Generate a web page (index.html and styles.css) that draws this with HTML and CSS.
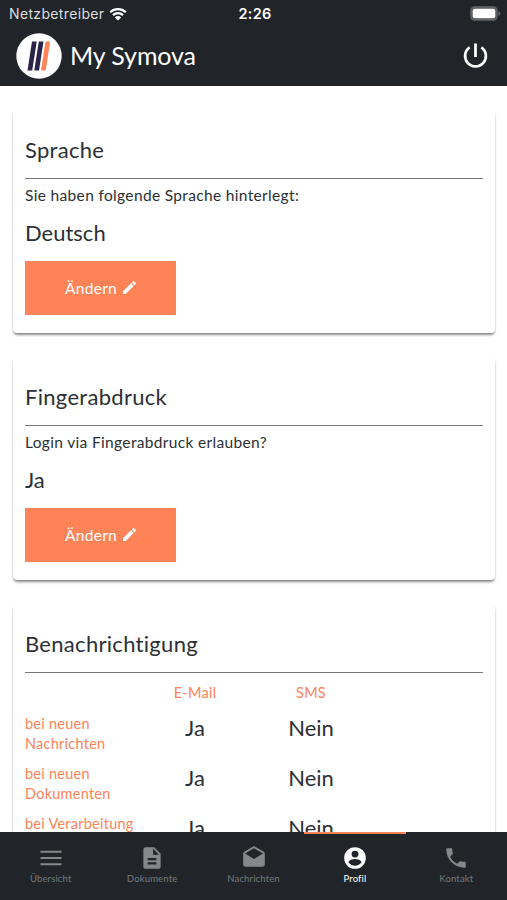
FILE: index.html
```html
<!DOCTYPE html>
<html lang="de">
<head>
    <meta charset="UTF-8">
    <title>My Symova</title>
    <link rel="stylesheet" href="styles.css">
</head>
<body>
    <header class="header">
        <div class="status-bar">
            <div class="carrier">
                <span>Netzbetreiber</span>
                <svg class="wifi" viewBox="0 0 18 14">
                    <path d="M1.2 5.2a11.2 11.2 0 0 1 15.6 0M4 8.1a7.2 7.2 0 0 1 10 0" fill="none" stroke="#fff" stroke-width="2.2"/>
                    <path d="M9 13.6 5.9 10.4a4.4 4.4 0 0 1 6.2 0z" fill="#fff"/>
                </svg>
            </div>
            <div class="clock">2:26</div>
            <svg class="battery" viewBox="0 0 31 15">
                <rect x="1" y="1" width="26" height="13" rx="3.5" fill="#55565a" stroke="#66676b" stroke-width="1.3"/>
                <rect x="2.7" y="2.7" width="22.6" height="9.6" rx="2" fill="#fff"/>
                <path d="M28.4 5.2c2.6.8 2.6 3.8 0 4.6z" fill="#66676b"/>
            </svg>
        </div>
        <div class="title-bar">
            <svg class="logo" viewBox="0 0 46 46">
                <circle cx="23" cy="23" r="22.7" fill="#fff"/>
                <path d="M16 8.500h4.700L16.200 37.500h-4.700z" fill="#2b2348"/>
                <path d="M22.800 8.500h4.700L23 37.500h-4.700z" fill="#2b2348"/>
                <path d="M29.500 8.500h4.700L29.700 37.500H25z" fill="#ff8357"/>
            </svg>
            <h1>My Symova</h1>
            <svg class="power" viewBox="0 0 24 24">
                <path d="M6.400 4.100a10 10 0 1 0 11.200 0M12 .5v13" fill="none" stroke="#fff" stroke-width="2.600"/>
            </svg>
        </div>
    </header>

    <main class="content">
        <section class="card">
            <h2>Sprache</h2>
            <p>Sie haben folgende Sprache hinterlegt:</p>
            <div class="value">Deutsch</div>
            <button>
                <span>Ändern</span>
                <svg class="pencil" viewBox="3 3 18 18"><path d="M3 17.250V21h3.750L17.810 9.940l-3.750-3.750L3 17.250zM20.710 7.040a1 1 0 0 0 0-1.410l-2.340-2.340a1 1 0 0 0-1.410 0l-1.830 1.830 3.750 3.750 1.830-1.830z"/></svg>
            </button>
        </section>

        <section class="card">
            <h2>Fingerabdruck</h2>
            <p>Login via Fingerabdruck erlauben?</p>
            <div class="value">Ja</div>
            <button>
                <span>Ändern</span>
                <svg class="pencil" viewBox="3 3 18 18"><path d="M3 17.250V21h3.750L17.810 9.940l-3.750-3.750L3 17.250zM20.710 7.040a1 1 0 0 0 0-1.410l-2.340-2.340a1 1 0 0 0-1.410 0l-1.830 1.830 3.750 3.750 1.830-1.830z"/></svg>
            </button>
        </section>

        <section class="card card-options">
            <h2>Benachrichtigung</h2>
            <div class="options">
                <div class="option-head"></div>
                <div class="option-head">E-Mail</div>
                <div class="option-head">SMS</div>

                <div class="option-label">bei neuen<br>Nachrichten</div>
                <div class="option-value">Ja</div>
                <div class="option-value">Nein</div>

                <div class="option-label">bei neuen<br>Dokumenten</div>
                <div class="option-value">Ja</div>
                <div class="option-value">Nein</div>

                <div class="option-label">bei Verarbeitung</div>
                <div class="option-value">Ja</div>
                <div class="option-value">Nein</div>
            </div>
        </section>
    </main>

    <nav class="tabs">
        <a class="tab">
            <svg viewBox="0 0 26 26"><path d="M2.500 5.700h21v2h-21zM2.500 12h21v2h-21zM2.500 18.200h21v2h-21z"/></svg>
            <span>Übersicht</span>
        </a>
        <a class="tab">
            <svg viewBox="0 0 24 24"><path d="M14 2H6c-1.100 0-2 .9-2 2v16c0 1.100.9 2 2 2h12c1.100 0 2-.9 2-2V8l-6-6zm2 16H8v-2h8v2zm0-4H8v-2h8v2zm-3-5V3.500L18.500 9H13z"/></svg>
            <span>Dokumente</span>
        </a>
        <a class="tab">
            <svg viewBox="0 0 24 24"><path d="M21.990 8c0-.72-.37-1.350-.94-1.700L12 1 2.950 6.300C2.380 6.650 2 7.280 2 8v10c0 1.100.9 2 2 2h16c1.100 0 2-.9 2-2l-.01-10zM12 13 3.740 7.840 12 3l8.260 4.840L12 13z"/></svg>
            <span>Nachrichten</span>
        </a>
        <a class="tab active">
            <svg viewBox="0 0 24 24"><path fill-rule="evenodd" d="M12 2a10 10 0 1 0 0 20 10 10 0 0 0 0-20zm0 3.200a3.200 3.200 0 1 1 0 6.400 3.200 3.200 0 0 1 0-6.400zM12 19.200c-2.500 0-4.710-1.280-6-3.220.03-1.990 4-3.080 6-3.080s5.970 1.090 6 3.080a7.200 7.200 0 0 1-6 3.220z"/></svg>
            <span>Profil</span>
        </a>
        <a class="tab">
            <svg viewBox="0 0 24 24"><path d="M6.620 10.790c1.440 2.830 3.760 5.140 6.590 6.590l2.200-2.200c.27-.27.67-.36 1.020-.24 1.120.37 2.330.57 3.570.57.55 0 1 .45 1 1V20c0 .55-.45 1-1 1C10.610 21 3 13.390 3 4c0-.55.45-1 1-1h3.500c.55 0 1 .45 1 1 0 1.250.2 2.450.57 3.570.11.35.03.74-.25 1.020l-2.200 2.200z"/></svg>
            <span>Kontakt</span>
        </a>
    </nav>
</body>
</html>
```

FILE: styles.css
```css
* {
    box-sizing: border-box;
}
body {
    margin: 0;
    height: 900px;
    display: flex;
    flex-direction: column;
    overflow: hidden;
    font-family: Lato, sans-serif;
    font-variant-ligatures: none;
    color: #2c3034;
    background-color: #fff;
}
h1, h2, p {
    margin: 0;
    font-weight: normal;
}
.header {
    flex: none;
    height: 86px;
    background-color: #212529;
    color: #fff;
}
.status-bar {
    display: grid;
    grid-template-columns: 1fr auto 1fr;
    align-items: center;
    height: 27px;
    padding: 0 6px 0 9px;
    font-family: Inter, sans-serif;
    font-size: 14px;
}
.carrier {
    display: flex;
    align-items: center;
    gap: 5px;
    color: #dddddf;
    letter-spacing: 0.35px;
}
.wifi {
    width: 18px;
    height: 14px;
}
.clock {
    font-weight: 600;
    font-size: 14.5px;
    letter-spacing: 0.3px;
}
.battery {
    justify-self: end;
    width: 31px;
    height: 15px;
}
.title-bar {
    display: flex;
    align-items: center;
    height: 57px;
    padding: 0 19px 0 16px;
}
.logo {
    width: 46px;
    height: 46px;
}
h1 {
    flex: 1;
    margin-left: 8px;
    padding-bottom: 2px;
    font-size: 25px;
    letter-spacing: -0.1px;
}
.power {
    width: 25px;
    height: 25px;
}
.content {
    flex: 1;
    min-height: 0;
    overflow: hidden;
    padding: 25px 12px 0 13px;
}
.card {
    height: 222px;
    margin-bottom: 25px;
    padding: 0 12px;
    border-radius: 4px;
    box-shadow: 0 3px 3px -1px rgba(0,0,0,0.4), 0 1px 2px rgba(0,0,0,0.2);
}
.card-options {
    height: 280px;
}
h2 {
    height: 68px;
    padding-top: 25px;
    border-bottom: 1px solid #77797b;
    font-size: 22px;
    line-height: 28px;
    letter-spacing: 0.3px;
}
p {
    padding-top: 5px;
    font-size: 15.5px;
    line-height: 22px;
    letter-spacing: 0.34px;
}
.value {
    margin-top: 12px;
    font-size: 22px;
    line-height: 30px;
}
button {
    display: flex;
    align-items: center;
    justify-content: center;
    gap: 6px;
    width: 151px;
    height: 54px;
    margin-top: 13px;
    padding: 0 0 1px;
    border: none;
    background-color: #ff8357;
    color: #fff;
    font-family: inherit;
    font-size: 15.5px;
    letter-spacing: 0.3px;
}
.pencil {
    width: 13px;
    height: 13px;
    fill: #fff;
}
.options {
    display: grid;
    grid-template-columns: 112px 116px 116px;
    grid-template-rows: 31px 50px 50px 50px;
    padding-top: 10px;
    line-height: 20px;
}
.option-head, .option-label {
    color: #ff8357;
    font-size: 14.5px;
    letter-spacing: 0.25px;
    white-space: nowrap;
}
.option-head {
    text-align: center;
}
.option-value {
    font-size: 22px;
    line-height: 28px;
    text-align: center;
}
.tabs {
    flex: none;
    display: flex;
    height: 68px;
    background-color: #212529;
}
.tab {
    flex: 1;
    display: flex;
    flex-direction: column;
    align-items: center;
    padding-top: 11px;
    border-top: 2px solid transparent;
    color: #77797b;
    fill: #85878a;
    font-size: 9.5px;
    line-height: 14px;
    letter-spacing: 0.15px;
}
.tab svg {
    width: 26px;
    height: 26px;
    margin-bottom: 1px;
}
.tab.active {
    border-top-color: #ff8357;
    color: #fff;
    fill: #fff;
}
```
